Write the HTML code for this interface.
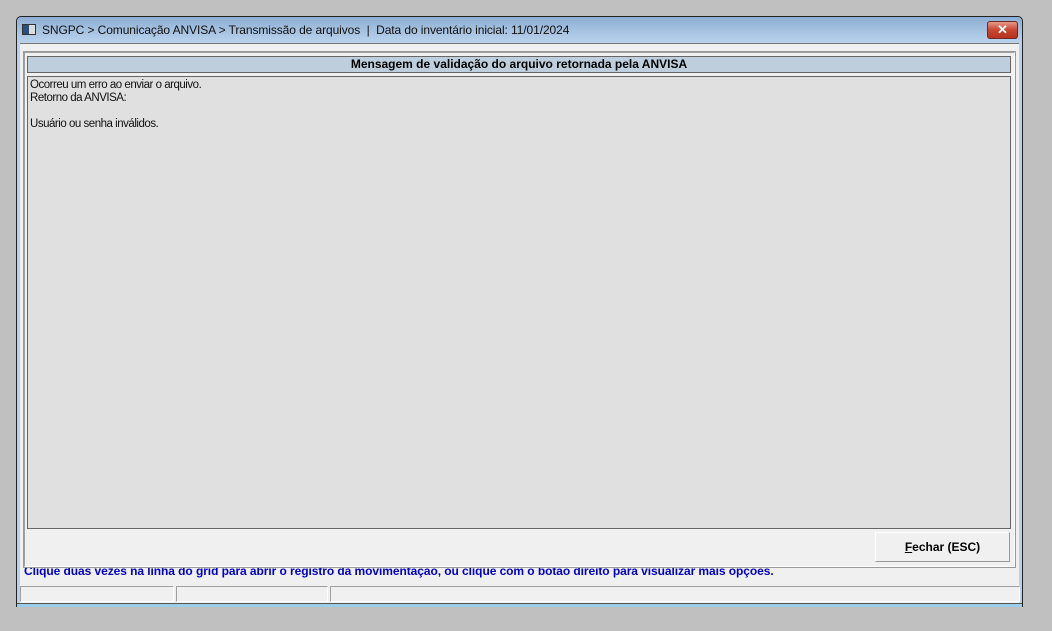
<!DOCTYPE html>
<html><head><style>
*{margin:0;padding:0;box-sizing:border-box}
body{width:1052px;height:631px;background:#c0c0c0;position:relative;overflow:hidden;font-family:"Liberation Sans",sans-serif}
.win{position:absolute;left:16px;top:16px;width:1007px;height:591px;border:1px solid #222;border-radius:5px 5px 0 0;background:linear-gradient(#94b2d6,#b9d1ea 26px,#b9d1ea);}
.title{position:absolute;left:0;top:0;width:100%;height:26px;background:linear-gradient(#8eaed3,#bad3ec);border-radius:5px 5px 0 0}
.title span{position:absolute;left:25px;top:6px;font-size:12px;color:#111;letter-spacing:-0.09px}
.ico{position:absolute;left:5px;top:7px;width:14px;height:11px;border:1px solid #333;background:linear-gradient(90deg,#2a4f7a 50%,#ddd 50%)}
.close{position:absolute;left:970px;top:4px;width:31px;height:18px;border:1px solid #6b2a22;border-radius:3px;background:linear-gradient(#e39a88,#c8452f 50%,#b63420);color:#fff;font-weight:bold;font-size:13px;text-align:center;line-height:16px}
.client{position:absolute;left:3px;top:26px;width:999px;height:561px;background:#f0f0f0;border-top:1px solid #777}
.panel{position:absolute;left:4px;top:8px;width:991px;height:515px;border:1px solid #a0a0a0;border-right-color:#fff;border-bottom-color:#fff;outline:1px solid #999}
.hdr{position:absolute;left:7px;top:12px;width:984px;height:17px;background:#bfcedc;border:1px solid #666;font-weight:bold;font-size:12px;text-align:center;line-height:15px;color:#000}
.txt{position:absolute;left:7px;top:32px;width:984px;height:453px;background:#e0e0e0;border:1px solid #666;font-size:11.5px;line-height:13px;padding:2px 2px;color:#111;letter-spacing:-0.48px}
.btn{position:absolute;left:855px;top:488px;width:135px;height:30px;border:1px solid #fff;border-right-color:#999;border-bottom-color:#999;font-weight:bold;font-size:12px;text-align:center;line-height:28px}
.blue{position:absolute;left:4px;top:524px;width:990px;height:11px;overflow:hidden;color:#0000c8;font-weight:bold;font-size:12px;line-height:10px;white-space:nowrap;letter-spacing:-0.07px}
.blue span{position:relative;top:-2px}
.sb{position:absolute;top:569px;height:16px;border:1px solid #a0a0a0;border-right-color:#fff;border-bottom-color:#fff}
.bot{position:absolute;left:0;top:586px;width:1005px;height:4px;background:#9ccde6;border-top:1px solid #555}
</style></head><body>
<div class="win">
<div class="title"><div class="ico"></div><span>SNGPC &gt; Comunicação ANVISA &gt; Transmissão de arquivos &nbsp;| &nbsp;Data do inventário inicial: 11/01/2024</span><div class="close">✕</div></div>
<div class="client">
<div class="panel"></div>
<div class="hdr">Mensagem de validação do arquivo retornada pela ANVISA</div>
<div class="txt">Ocorreu um erro ao enviar o arquivo.<br>Retorno da ANVISA:<br><br>Usuário ou senha inválidos.</div>
<div class="btn"><u>F</u>echar (ESC)</div>
<div class="blue"><span>Clique duas vezes na linha do grid para abrir o registro da movimentação, ou clique com o botão direito para visualizar mais opções.</span></div>
</div>
<div class="sb" style="left:3px;width:154px"></div>
<div class="sb" style="left:159px;width:152px"></div>
<div class="sb" style="left:313px;width:690px"></div>
<div class="bot"></div>
</div>
</body></html>
